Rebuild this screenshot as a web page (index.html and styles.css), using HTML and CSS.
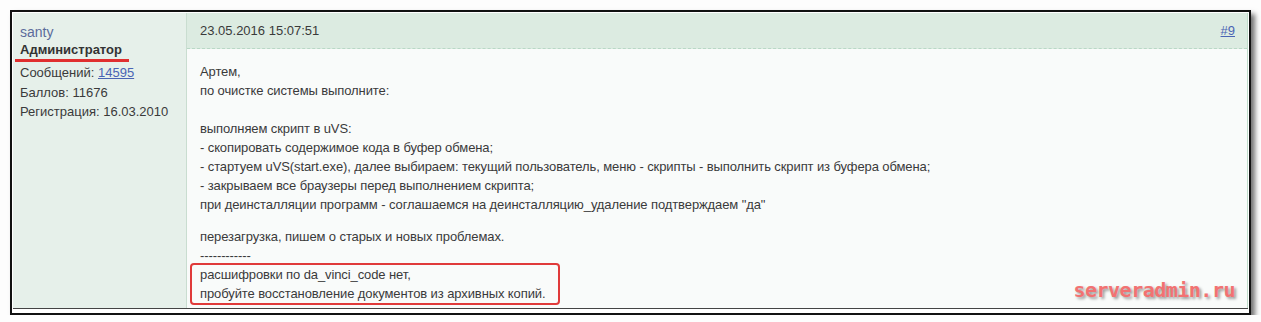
FILE: index.html
```html
<!DOCTYPE html>
<html>
<head>
  <title>Сообщение #9</title>
  <link rel="stylesheet" href="styles.css">
</head>
<body>
  <div class="shot">
    <div class="post">
      <div class="author">
        <div class="nick">santy</div>
        <div class="role">Администратор</div>
        <div class="stat">Сообщений: <a href="#">14595</a></div>
        <div class="stat">Баллов: 11676</div>
        <div class="stat">Регистрация: 16.03.2010</div>
      </div>
      <div class="message">
        <div class="message-head">
          <span>23.05.2016 15:07:51</span>
          <a href="#">#9</a>
        </div>
        <div class="message-body">
          <p>Артем,<br>по очистке системы выполните:</p>
          <p class="steps">выполняем скрипт в uVS:<br>
          - скопировать содержимое кода в буфер обмена;<br>
          - стартуем uVS(start.exe), далее выбираем: текущий пользователь, меню - скрипты - выполнить скрипт из буфера обмена;<br>
          - закрываем все браузеры перед выполнением скрипта;<br>
          при деинсталляции программ - соглашаемся на деинсталляцию_удаление подтверждаем "да"</p>
          <p class="last">перезагрузка, пишем о старых и новых проблемах.<br>
          ------------</p>
          <div class="marked">расшифровки по da_vinci_code нет,<br>пробуйте восстановление документов из архивных копий.</div>
        </div>
        <div class="watermark">serveradmin.ru</div>
      </div>
    </div>
  </div>
</body>
</html>
```

FILE: styles.css
```css
body {
  margin: 0;
  background-color: #fdfdfd;
  font-family: 'Liberation Sans', Arial, sans-serif;
  color: #3a3a3a;
}

.shot {
  margin: 10px 0 0 10px;
  width: 1235px;
  height: 296px;
  border: 2px solid #111;
  padding: 1px 1px 4px 1px;
  background-color: #fff;
  box-shadow: 4px 4px 5px rgba(0, 0, 0, 0.55);
}

.post {
  display: flex;
  height: 100%;
  border-bottom: 1px solid #444;
  box-sizing: border-box;
  overflow: hidden;
}

.author {
  flex: none;
  width: 174px;
  background-color: #e6f0ea;
  border-right: 1px solid #c9ddd0;
  padding: 11px 0 0 7px;
  box-sizing: border-box;
  font-size: 13px;
}

.nick {
  font-size: 14px;
  color: #5b6b9c;
  line-height: 17px;
}

.role {
  display: inline-block;
  font-weight: bold;
  font-size: 13px;
  color: #333;
  line-height: 17px;
  margin: 0 0 1px -5px;
  padding: 0 7px 1px 5px;
  border-bottom: 3px solid #e02f2f;
}

.stat {
  line-height: 19.5px;
}

.stat a {
  color: #4a64b4;
}

.message {
  flex: 1;
  position: relative;
  background-color: #f9fbfa;
  border-right: 1px solid #bfdcca;
}

.message-head {
  display: flex;
  justify-content: space-between;
  background-color: #dcebe1;
  border-bottom: 1px dashed #b9d8c6;
  padding: 10px 12px 0 13px;
  height: 25px;
  font-size: 13px;
}

.message-head a {
  color: #4a64b4;
}

.message-body {
  padding: 13px 13px 0 13px;
  font-size: 13px;
  line-height: 19px;
  letter-spacing: -0.1px;
}

.message-body p {
  margin: 0 0 19px 0;
}

.message-body p.steps {
  margin-bottom: 13px;
}

.message-body p.last {
  margin: 0;
}

.marked {
  display: inline-block;
  margin: -2px 0 0 -10px;
  padding: 0 12px 0 8px;
  border: 2px solid #e03a3a;
  border-radius: 4px;
}

.watermark {
  position: absolute;
  right: 12px;
  bottom: 6px;
  font-family: 'DejaVu Sans Mono', monospace;
  font-size: 20px;
  font-weight: bold;
  letter-spacing: -0.5px;
  color: #f27272;
  text-shadow: 2px 2px 3px rgba(0, 0, 0, 0.4);
}
```
